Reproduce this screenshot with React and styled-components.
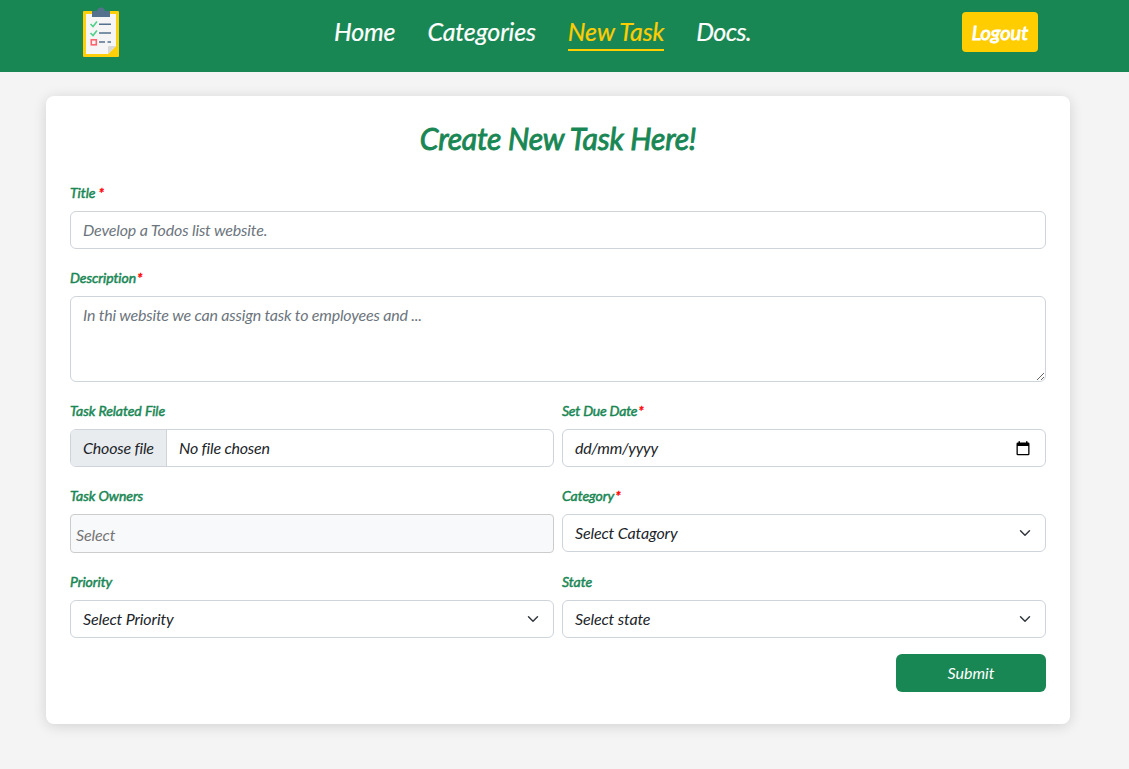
import React from "react";
import styled, { createGlobalStyle } from "styled-components";

const Global = createGlobalStyle`
  *, *::before, *::after { box-sizing: border-box; }
  body {
    margin: 0;
    background: #f4f4f4;
    color: #212529;
    font-family: Lato, "Liberation Sans", sans-serif;
    font-style: italic;
    font-size: 16px;
    line-height: 24px;
  }
`;

const Page = styled.div`
  min-height: 769px;
  padding-bottom: 45px;
  background: #f4f4f4;
`;

const Navbar = styled.header`
  height: 72px;
  padding: 0 91px 0 83px;
  display: grid;
  grid-template-columns: 251px 1fr 76px;
  background: #198754;
`;

const Logo = styled.svg`
  display: block;
  margin-top: 7px;
`;

const NavLinks = styled.nav`
  display: flex;
  align-items: flex-start;
  gap: 32px;
  padding-top: 12px;
`;

const NavLink = styled.a`
  height: 39px;
  font-size: 25px;
  line-height: 39px;
  letter-spacing: ${(p) => p.$tracking || -0.14}px;
  white-space: nowrap;
  color: ${(p) => (p.$active ? "#ffcd00" : "#fff")};
  border-bottom: 2px solid ${(p) => (p.$active ? "#ffcd00" : "transparent")};
  -webkit-text-stroke: 0.2px currentColor;
`;

const LogoutButton = styled.button`
  height: 40px;
  margin-top: 12px;
  padding: 0;
  border: 0;
  border-radius: 4px;
  background: #ffcd00;
  color: #fff;
  font: italic 400 20px/30px Lato, sans-serif;
  -webkit-text-stroke: 0.9px #fff;
`;

const Card = styled.main`
  width: 1024px;
  height: 628px;
  margin: 24px 0 0 46px;
  padding: 23px 24px 24px;
  border-radius: 8px;
  background: #fff;
  box-shadow: 0 2px 14px rgba(0, 0, 0, 0.14);
`;

const Heading = styled.h1`
  margin: 0 0 25px;
  font-size: 30px;
  line-height: 38px;
  letter-spacing: -0.2px;
  font-weight: 400;
  text-align: center;
  color: #198754;
  -webkit-text-stroke: 0.9px #198754;
`;

const Form = styled.form`
  display: grid;
  grid-template-columns: 1fr 1fr;
  column-gap: 8px;
  row-gap: 18px;
`;

const Field = styled.div`
  min-width: 0;
  grid-column: ${(p) => (p.$wide ? "1 / -1" : "auto")};
`;

const Label = styled.label`
  display: block;
  margin-bottom: 8px;
  font-size: 14px;
  line-height: 21px;
  letter-spacing: ${(p) => p.$tracking || -0.06}px;
  color: #198754;
  -webkit-text-stroke: 0.5px #198754;
`;

const Star = styled.span`
  color: #f00;
  margin-left: ${(p) => p.$gap || 1}px;
  -webkit-text-stroke: 0.4px #f00;
`;

const Input = styled.input`
  display: block;
  width: 100%;
  height: 38px;
  padding: 5px 12px 7px;
  border: 1px solid #ced4da;
  border-radius: 6px;
  background: #fff;
  font: inherit;
  letter-spacing: -0.17px;
  outline: 0;
  &::placeholder { color: #6c757d; opacity: 1; }
`;

const TextArea = styled(Input).attrs({ as: "textarea" })`
  height: 86px;
  padding: 6px 12px;
  letter-spacing: -0.19px;
  resize: vertical;
`;

const Control = styled.div`
  display: flex;
  align-items: center;
  justify-content: space-between;
  height: 38px;
  padding: 0 ${(p) => p.$end || 12}px 0 12px;
  border: 1px solid #ced4da;
  border-radius: 6px;
  letter-spacing: ${(p) => p.$tracking || -0.13}px;
  overflow: hidden;
`;

const FilePicker = styled(Control)`
  justify-content: flex-start;
  padding: 0;
  letter-spacing: -0.2px;
`;

const FileButton = styled.span`
  width: 96px;
  height: 36px;
  padding: 6px 0 0 12px;
  margin-right: 12px;
  border-right: 1px solid #ced4da;
  background: #e9ecef;
  white-space: nowrap;
`;

const OwnersBox = styled.div`
  height: 39px;
  padding: 8px 5px 0;
  border: 1px solid #ccc;
  border-radius: 4px;
  background: #f8f9fa;
  color: #757575;
  letter-spacing: -0.1px;
`;

const SubmitButton = styled.button`
  display: block;
  width: 150px;
  height: 38px;
  margin: 16px 0 0 auto;
  padding: 0;
  border: 0;
  border-radius: 6px;
  background: #198754;
  color: #fff;
  font: inherit;
`;

function ClipboardLogo() {
  return (
    <Logo width="36" height="50" viewBox="0 0 36 50">
      <rect y="4" width="36" height="46" rx="1" fill="#ffcf0a" />
      <path d="M3 7H33V39L25 47H3Z" fill="#f5f5f5" />
      <path d="M33 39H26Q25 39 25 40V47Z" fill="#d8d8d8" />
      <path d="M9 4H14Q14.5 .5 18 .5T22 4H27V10H9Z" fill="#54718d" />
      <path d="M7.5 17L10 19.5L14 14.5M7.5 26L10 28.5L14 23.5" fill="none" stroke="#4fd08a" strokeWidth="1.6" />
      <rect x="8.3" y="32.8" width="5" height="5" fill="none" stroke="#ff6370" strokeWidth="1.6" />
      <path d="M16 17.2H28M16 26H28M16 35H22M24.5 35H28" stroke="#54718d" strokeWidth="1.5" />
    </Logo>
  );
}

function Chevron() {
  return (
    <svg width="16" height="12" viewBox="0 0 16 16">
      <path d="m2 5 6 6 6-6" fill="none" stroke="#343a40" strokeWidth="2" strokeLinecap="round" strokeLinejoin="round" />
    </svg>
  );
}

function CalendarIcon() {
  return (
    <svg width="14" height="15" viewBox="0 0 14 15">
      <path
        d="M12.2 1.5H11.5V.2H10V1.5H4V.2H2.5V1.5H1.8Q.5 1.5 .5 2.8V13Q.5 14.3 1.8 14.3H12.2Q13.5 14.3 13.5 13V2.8Q13.5 1.5 12.2 1.5ZM12.2 13.1H1.8V5H12.2Z"
        fill="#000"
      />
    </svg>
  );
}

function SelectField({ label, value, required }) {
  return (
    <Field>
      <Label>{label}{required && <Star>*</Star>}</Label>
      <Control>
        {value}
        <Chevron />
      </Control>
    </Field>
  );
}

export default function App() {
  return (
    <Page>
      <Global />
      <Navbar>
        <ClipboardLogo />
        <NavLinks>
          <NavLink>Home</NavLink>
          <NavLink>Categories</NavLink>
          <NavLink $active tracking={-0.1}>New Task</NavLink>
          <NavLink $tracking={-0.6}>Docs.</NavLink>
        </NavLinks>
        <LogoutButton>Logout</LogoutButton>
      </Navbar>
      <Card>
        <Heading>Create New Task Here!</Heading>
        <Form>
          <Field $wide>
            <Label>Title<Star $gap={3}>*</Star></Label>
            <Input placeholder="Develop a Todos list website." />
          </Field>
          <Field $wide>
            <Label>Description<Star>*</Star></Label>
            <TextArea placeholder="In thi website we can assign task to employees and ..." />
          </Field>
          <Field>
            <Label>Task Related File</Label>
            <FilePicker>
              <FileButton>Choose file</FileButton>
              No file chosen
            </FilePicker>
          </Field>
          <Field>
            <Label $tracking={-0.2}>Set Due Date<Star>*</Star></Label>
            <Control $end={15} $tracking={-0.3}>
              dd/mm/yyyy
              <CalendarIcon />
            </Control>
          </Field>
          <Field>
            <Label>Task Owners</Label>
            <OwnersBox>Select</OwnersBox>
          </Field>
          <SelectField label="Category" value="Select Catagory" required />
          <SelectField label="Priority" value="Select Priority" />
          <SelectField label="State" value="Select state" />
        </Form>
        <SubmitButton>Submit</SubmitButton>
      </Card>
    </Page>
  );
}
